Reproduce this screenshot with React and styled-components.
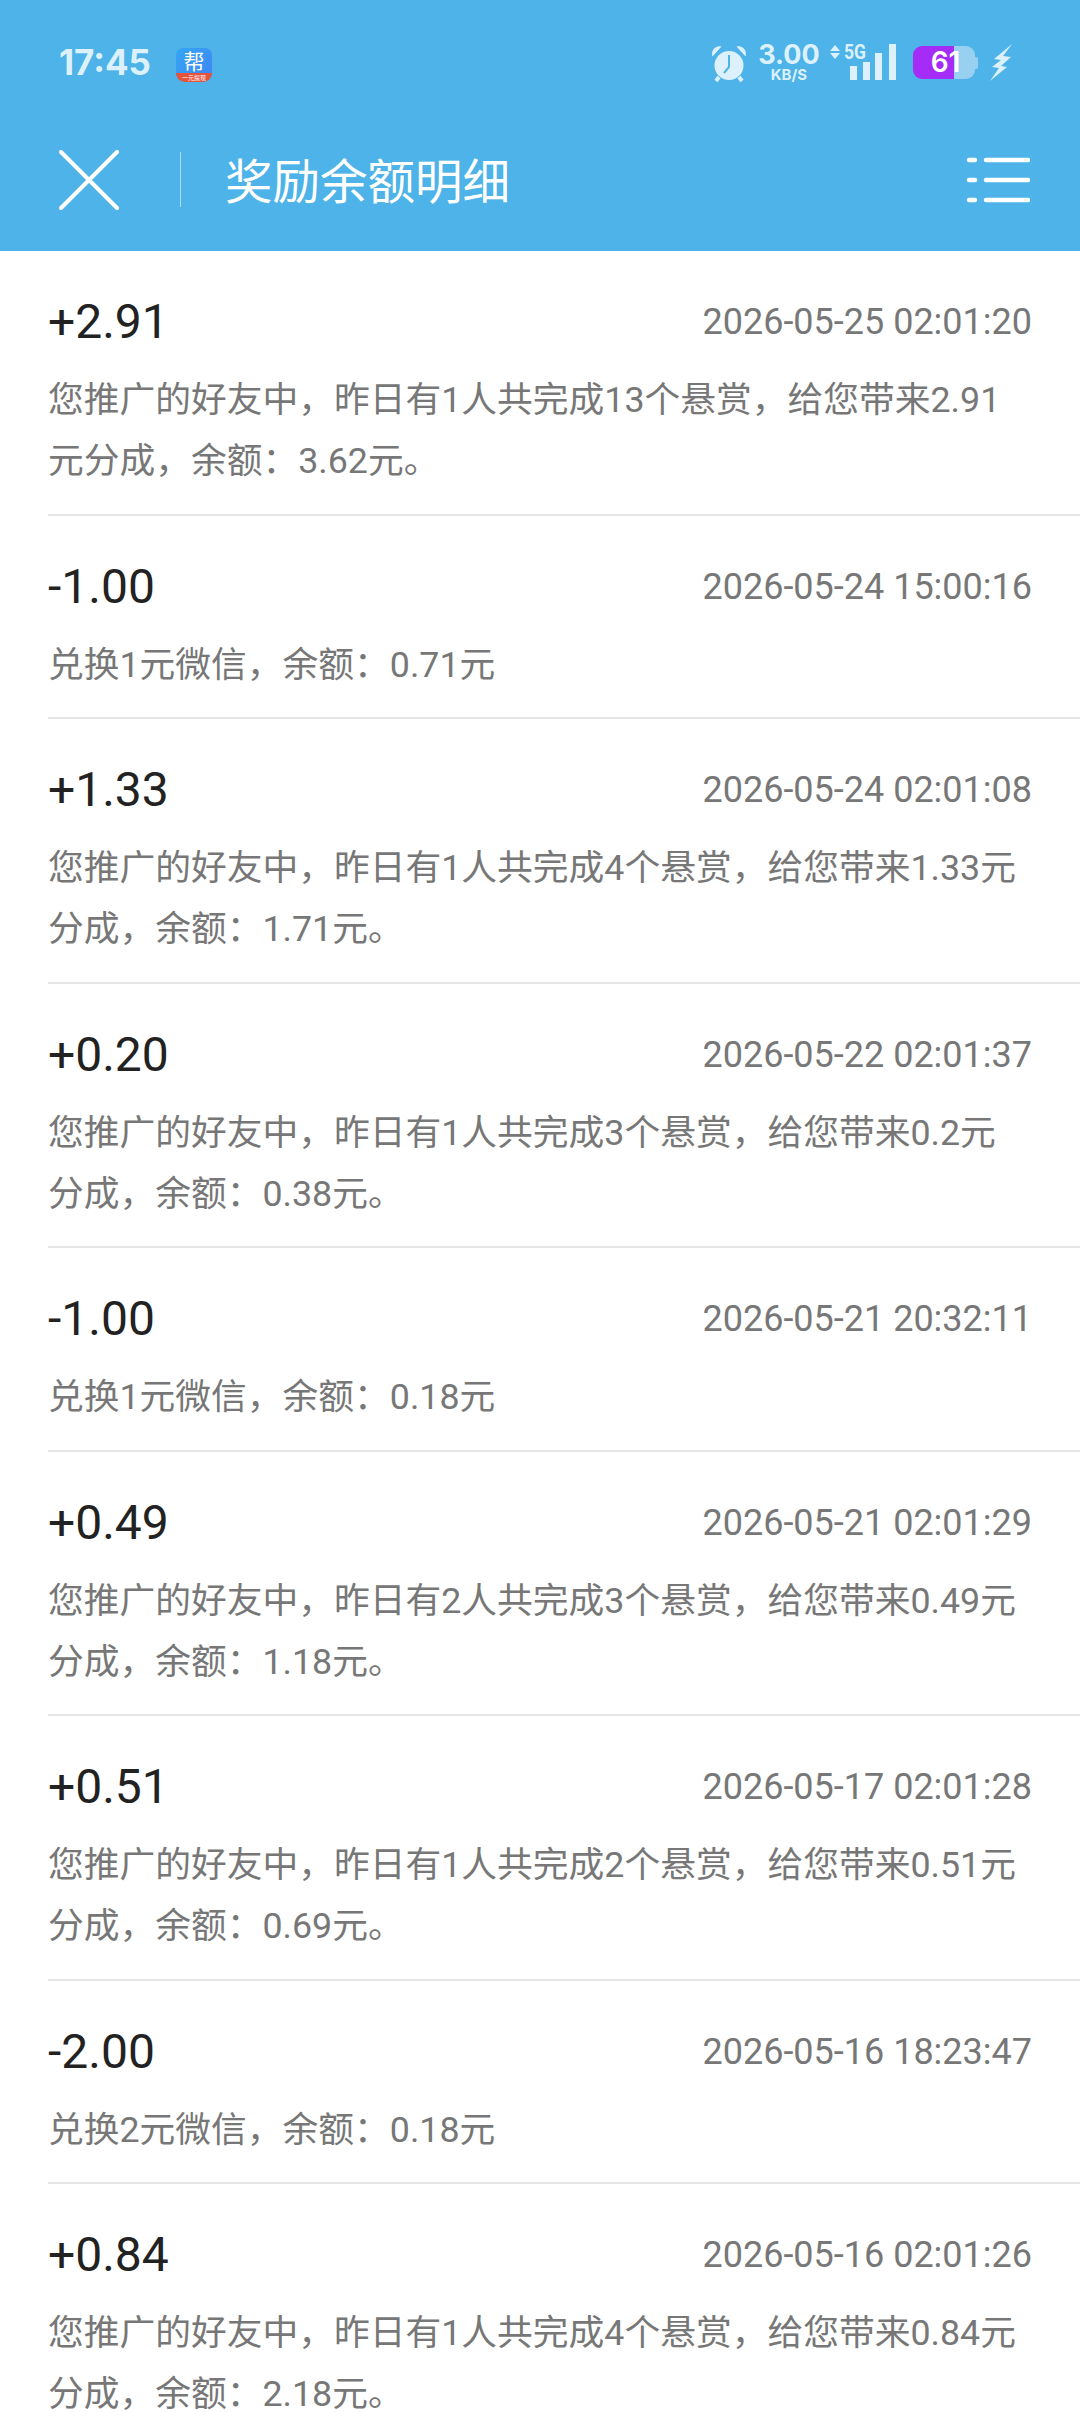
import React from 'react';
import styled, {createGlobalStyle} from 'styled-components';

const RECORDS = [
  {amount: '+2.91', time: '2026-05-25 02:01:20', text: '您推广的好友中，昨日有1人共完成13个悬赏，给您带来2.91元分成，余额：3.62元。'},
  {amount: '-1.00', time: '2026-05-24 15:00:16', text: '兑换1元微信，余额：0.71元'},
  {amount: '+1.33', time: '2026-05-24 02:01:08', text: '您推广的好友中，昨日有1人共完成4个悬赏，给您带来1.33元分成，余额：1.71元。'},
  {amount: '+0.20', time: '2026-05-22 02:01:37', text: '您推广的好友中，昨日有1人共完成3个悬赏，给您带来0.2元分成，余额：0.38元。'},
  {amount: '-1.00', time: '2026-05-21 20:32:11', text: '兑换1元微信，余额：0.18元'},
  {amount: '+0.49', time: '2026-05-21 02:01:29', text: '您推广的好友中，昨日有2人共完成3个悬赏，给您带来0.49元分成，余额：1.18元。'},
  {amount: '+0.51', time: '2026-05-17 02:01:28', text: '您推广的好友中，昨日有1人共完成2个悬赏，给您带来0.51元分成，余额：0.69元。'},
  {amount: '-2.00', time: '2026-05-16 18:23:47', text: '兑换2元微信，余额：0.18元'},
  {amount: '+0.84', time: '2026-05-16 02:01:26', text: '您推广的好友中，昨日有1人共完成4个悬赏，给您带来0.84元分成，余额：2.18元。'},
];

const STATUS_COLOR = '#dcf1fc';

const GlobalStyle = createGlobalStyle`
  html, body {
    margin: 0;
    padding: 0;
    background: #fff;
  }
  body {
    height: 2412px;
    overflow: hidden;
    font-family: Roboto, "Noto Sans CJK SC", sans-serif;
  }
`;

const Page = styled.div`
  width: 1080px;
  height: 2412px;
  overflow: hidden;
  background-color: #fff;
`;

const Header = styled.header`
  height: 251px;
  background-color: #4db3e8;
`;

const StatusBar = styled.div`
  display: flex;
  align-items: flex-start;
  height: 84px;
  box-sizing: border-box;
  padding: 44px 68px 0 59px;
`;

const Clock = styled.div`
  width: 117px;
  font-family: Inter, sans-serif;
  font-size: 35px;
  font-weight: 700;
  line-height: 37px;
  color: ${STATUS_COLOR};
`;

const AppBadge = styled.div`
  position: relative;
  display: flex;
  flex-direction: column;
  align-items: center;
  width: 36px;
  height: 34px;
  margin-top: 4px;
  border-radius: 7px 7px 10px 10px;
  background: linear-gradient(135deg, #35a6f4, #3f84f2);
`;

const BadgeGlyph = styled.span`
  font-family: "Noto Sans CJK SC", sans-serif;
  font-size: 21px;
  line-height: 25px;
  color: #fff;
`;

const BadgeBand = styled.span`
  position: absolute;
  left: 0;
  right: 0;
  bottom: 0;
  height: 9px;
  border-radius: 0 0 10px 10px;
  font-family: "Noto Sans CJK SC", sans-serif;
  font-size: 6px;
  line-height: 9px;
  text-align: center;
  color: #fff;
  background-color: #e5533d;
`;

const StatusIcons = styled.div`
  display: flex;
  align-items: flex-start;
  margin-left: auto;
`;

const Speed = styled.div`
  display: flex;
  flex-direction: column;
  align-items: center;
  width: 60px;
  margin: -1px 11px 0 12px;
  font-family: Inter, sans-serif;
  color: ${STATUS_COLOR};
`;

const SpeedValue = styled.span`
  font-size: 27px;
  font-weight: 700;
  line-height: 24px;
`;

const SpeedUnit = styled.span`
  font-size: 15px;
  font-weight: 700;
  line-height: 15px;
`;

const Battery = styled.div`
  width: 62px;
  height: 33px;
  margin: 2px 0 0 17px;
  overflow: hidden;
  border-radius: 9px;
  font-family: Inter, sans-serif;
  font-size: 28px;
  font-weight: 600;
  line-height: 33px;
  text-align: center;
  text-indent: 3px;
  color: #fff;
  background: linear-gradient(90deg, #a52cf6 41px, #98d0f1 41px);
`;

const BatteryCap = styled.div`
  width: 3px;
  height: 12px;
  margin: 13px 0 0 0;
  border-radius: 0 2px 2px 0;
  background-color: #98d0f1;
`;

const IconSvg = styled.svg`
  display: block;
  flex-shrink: 0;
  overflow: visible;
  margin-left: ${({$left}) => $left || 0}px;
`;

const NavBar = styled.div`
  display: flex;
  align-items: center;
  height: 143px;
  padding: 24px 50px 0 59px;
`;

const CloseIcon = styled.svg`
  display: block;
  width: 60px;
  height: 60px;
`;

const Divider = styled.div`
  width: 1px;
  height: 55px;
  margin: 0 44px 0 61px;
  background-color: rgba(255, 255, 255, 0.55);
`;

const Title = styled.h1`
  flex: 1;
  margin: -2px 0 0;
  font-family: "Noto Sans CJK SC", sans-serif;
  font-size: 47.5px;
  font-weight: 400;
  line-height: 60px;
  color: #fff;
`;

const MenuIcon = styled.svg`
  display: block;
  width: 64px;
  height: 46px;
`;

const List = styled.div`
  display: flex;
  flex-direction: column;
`;

const Row = styled.div`
  box-sizing: border-box;
  margin-left: 48px;
  padding: 41px 48px 21.5px 0;
  border-bottom: 2px solid #e6e6e6;
`;

const RowTop = styled.div`
  display: flex;
  align-items: center;
  justify-content: space-between;
  height: 60px;
  margin-bottom: 18px;
`;

const Amount = styled.span`
  font-size: 48px;
  line-height: 60px;
  color: #222;
`;

const Time = styled.span`
  font-size: 36px;
  line-height: 60px;
  color: #777;
`;

const Desc = styled.p`
  margin: 0;
  padding-right: 4px;
  font-family: Roboto, "Noto Sans CJK SC", sans-serif;
  font-size: 35.75px;
  line-height: 61px;
  color: #777;
`;

const AlarmIcon = () => (
  <IconSvg width="36" height="38" viewBox="0 0 36 38">
    <circle cx="18" cy="21.5" r="14.5" fill={STATUS_COLOR} />
    <path d="M1.5 12.5 C-0.5 7 4 1 10.5 2.5 Z M34.5 12.5 C36.5 7 32 1 25.5 2.5 Z" fill={STATUS_COLOR} />
    <path d="M8 33 L5 37 M28 33 L31 37" stroke={STATUS_COLOR} strokeWidth="4" />
    <path d="M18 11 L18 23 L13 29" fill="none" stroke="#4db3e8" strokeWidth="2" />
  </IconSvg>
);

const NetworkIcon = () => (
  <IconSvg width="66" height="36" viewBox="0 0 66 36">
    <path d="M5 1 L10 7 L0 7 Z M5 15 L10 9 L0 9 Z" fill={STATUS_COLOR} />
    <text x="14" y="15" fontFamily="Roboto, sans-serif" fontSize="20" fontWeight="700" fill={STATUS_COLOR} textLength="22" lengthAdjust="spacingAndGlyphs">5G</text>
    <rect x="20" y="22" width="7" height="14" fill={STATUS_COLOR} />
    <rect x="33" y="18" width="7" height="18" fill={STATUS_COLOR} />
    <rect x="45" y="9" width="7" height="27" fill={STATUS_COLOR} />
    <rect x="59" y="0" width="7" height="36" fill={STATUS_COLOR} />
  </IconSvg>
);

const BoltIcon = () => (
  <IconSvg width="22" height="37" viewBox="0 0 22 37" $left={12}>
    <path d="M22 0 L4 15 L11 16 L2 23 L9 24 L0 37 L17 23 L11 22 L21 13 L13 12 Z" fill={STATUS_COLOR} />
  </IconSvg>
);

const App = () => (
  <Page>
    <GlobalStyle />
    <Header>
      <StatusBar>
        <Clock>17:45</Clock>
        <AppBadge>
          <BadgeGlyph>帮</BadgeGlyph>
          <BadgeBand>一元提现</BadgeBand>
        </AppBadge>
        <StatusIcons>
          <AlarmIcon />
          <Speed>
            <SpeedValue>3.00</SpeedValue>
            <SpeedUnit>KB/S</SpeedUnit>
          </Speed>
          <NetworkIcon />
          <Battery>61</Battery>
          <BatteryCap />
          <BoltIcon />
        </StatusIcons>
      </StatusBar>
      <NavBar>
        <CloseIcon viewBox="0 0 60 60">
          <path d="M2 2 L58 58 M58 2 L2 58" stroke="#fff" strokeWidth="4" strokeLinecap="round" />
        </CloseIcon>
        <Divider />
        <Title>奖励余额明细</Title>
        <MenuIcon viewBox="0 0 64 46">
          <g stroke="#fff" strokeWidth="4.5" strokeLinecap="round">
            <path d="M3 3 H9 M20 3 H62" />
            <path d="M3 23 H9 M20 23 H62" />
            <path d="M3 43 H9 M20 43 H62" />
          </g>
        </MenuIcon>
      </NavBar>
    </Header>
    <List>
      {RECORDS.map(({amount, time, text}) => (
        <Row key={time}>
          <RowTop>
            <Amount>{amount}</Amount>
            <Time>{time}</Time>
          </RowTop>
          <Desc>{text}</Desc>
        </Row>
      ))}
    </List>
  </Page>
);

export default App;
